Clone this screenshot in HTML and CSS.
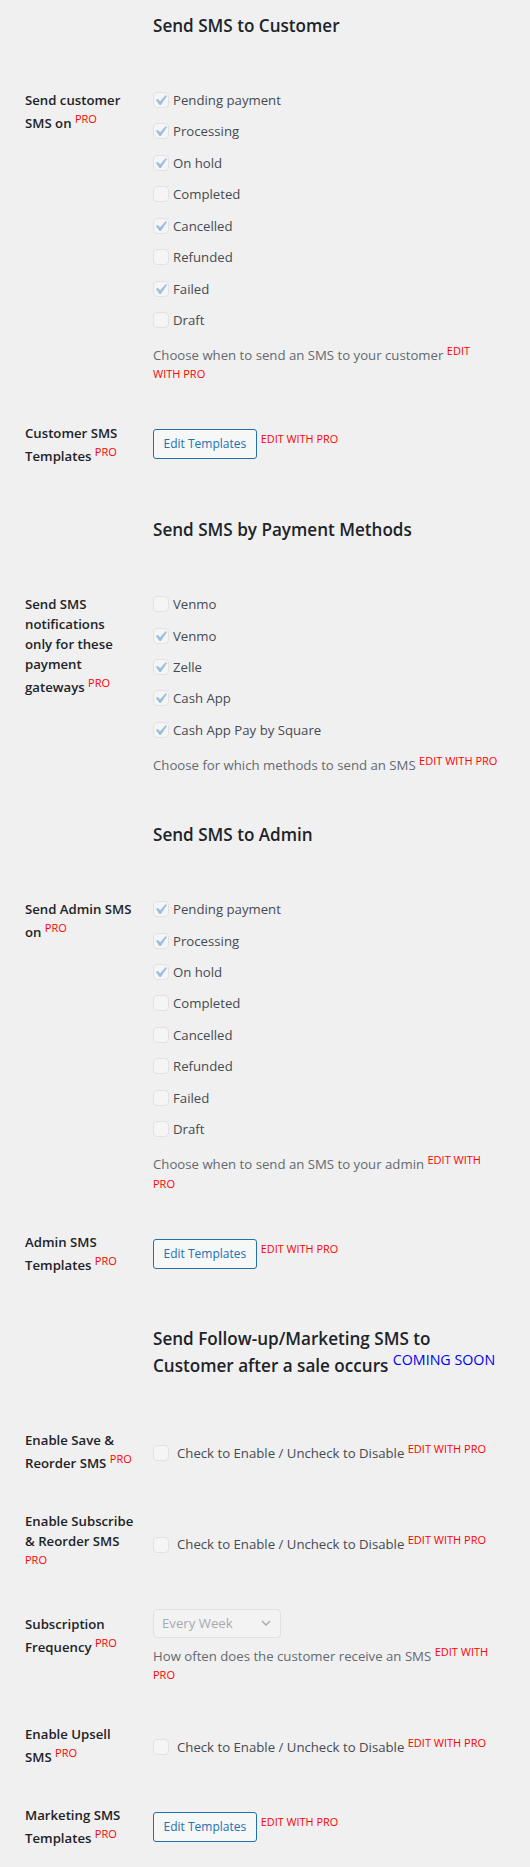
FILE: index.html
```html
<!DOCTYPE html>
<html lang="en">
<head>
<meta charset="utf-8">
<title>SMS Settings</title>
<link rel="stylesheet" href="styles.css">
</head>
<body>
<div class="settings">

  <div class="row row--title">
    <div class="label"></div>
    <h2 class="title">Send SMS to Customer</h2>
  </div>

  <div class="row">
    <div class="label">Send customer SMS on <sup class="pro">PRO</sup></div>
    <div class="field">
      <ul class="checks">
        <li><span class="cb is-checked"><svg viewBox="0 0 20 20"><path d="M14.83 4.89l1.34.94-5.81 8.38H9.02L5.78 9.67l1.34-1.25 2.57 2.4z"/></svg></span>Pending payment</li>
        <li><span class="cb is-checked"><svg viewBox="0 0 20 20"><path d="M14.83 4.89l1.34.94-5.81 8.38H9.02L5.78 9.67l1.34-1.25 2.57 2.4z"/></svg></span>Processing</li>
        <li><span class="cb is-checked"><svg viewBox="0 0 20 20"><path d="M14.83 4.89l1.34.94-5.81 8.38H9.02L5.78 9.67l1.34-1.25 2.57 2.4z"/></svg></span>On hold</li>
        <li><span class="cb"></span>Completed</li>
        <li><span class="cb is-checked"><svg viewBox="0 0 20 20"><path d="M14.83 4.89l1.34.94-5.81 8.38H9.02L5.78 9.67l1.34-1.25 2.57 2.4z"/></svg></span>Cancelled</li>
        <li><span class="cb"></span>Refunded</li>
        <li><span class="cb is-checked"><svg viewBox="0 0 20 20"><path d="M14.83 4.89l1.34.94-5.81 8.38H9.02L5.78 9.67l1.34-1.25 2.57 2.4z"/></svg></span>Failed</li>
        <li><span class="cb"></span>Draft</li>
      </ul>
      <p class="desc">Choose when to send an SMS to your customer <sup class="pro">EDIT WITH PRO</sup></p>
    </div>
  </div>

  <div class="row row--center">
    <div class="label">Customer SMS Templates <sup class="pro">PRO</sup></div>
    <div class="field field--inline">
      <button class="btn" type="button">Edit Templates</button>
      <span class="pro pro--side">EDIT WITH PRO</span>
    </div>
  </div>

  <div class="row row--title">
    <div class="label"></div>
    <h2 class="title">Send SMS by Payment Methods</h2>
  </div>

  <div class="row">
    <div class="label">Send SMS notifications only&nbsp;for&nbsp;these payment gateways <sup class="pro">PRO</sup></div>
    <div class="field">
      <ul class="checks">
        <li><span class="cb"></span>Venmo</li>
        <li><span class="cb is-checked"><svg viewBox="0 0 20 20"><path d="M14.83 4.89l1.34.94-5.81 8.38H9.02L5.78 9.67l1.34-1.25 2.57 2.4z"/></svg></span>Venmo</li>
        <li><span class="cb is-checked"><svg viewBox="0 0 20 20"><path d="M14.83 4.89l1.34.94-5.81 8.38H9.02L5.78 9.67l1.34-1.25 2.57 2.4z"/></svg></span>Zelle</li>
        <li><span class="cb is-checked"><svg viewBox="0 0 20 20"><path d="M14.83 4.89l1.34.94-5.81 8.38H9.02L5.78 9.67l1.34-1.25 2.57 2.4z"/></svg></span>Cash App</li>
        <li><span class="cb is-checked"><svg viewBox="0 0 20 20"><path d="M14.83 4.89l1.34.94-5.81 8.38H9.02L5.78 9.67l1.34-1.25 2.57 2.4z"/></svg></span>Cash App Pay by Square</li>
      </ul>
      <p class="desc">Choose for which methods to send an SMS <sup class="pro">EDIT WITH PRO</sup></p>
    </div>
  </div>

  <div class="row row--title">
    <div class="label"></div>
    <h2 class="title">Send SMS to Admin</h2>
  </div>

  <div class="row">
    <div class="label">Send Admin SMS on <sup class="pro">PRO</sup></div>
    <div class="field">
      <ul class="checks">
        <li><span class="cb is-checked"><svg viewBox="0 0 20 20"><path d="M14.83 4.89l1.34.94-5.81 8.38H9.02L5.78 9.67l1.34-1.25 2.57 2.4z"/></svg></span>Pending payment</li>
        <li><span class="cb is-checked"><svg viewBox="0 0 20 20"><path d="M14.83 4.89l1.34.94-5.81 8.38H9.02L5.78 9.67l1.34-1.25 2.57 2.4z"/></svg></span>Processing</li>
        <li><span class="cb is-checked"><svg viewBox="0 0 20 20"><path d="M14.83 4.89l1.34.94-5.81 8.38H9.02L5.78 9.67l1.34-1.25 2.57 2.4z"/></svg></span>On hold</li>
        <li><span class="cb"></span>Completed</li>
        <li><span class="cb"></span>Cancelled</li>
        <li><span class="cb"></span>Refunded</li>
        <li><span class="cb"></span>Failed</li>
        <li><span class="cb"></span>Draft</li>
      </ul>
      <p class="desc">Choose when to send an SMS to your admin <sup class="pro">EDIT WITH PRO</sup></p>
    </div>
  </div>

  <div class="row row--center">
    <div class="label">Admin SMS Templates <sup class="pro">PRO</sup></div>
    <div class="field field--inline">
      <button class="btn" type="button">Edit Templates</button>
      <span class="pro pro--side">EDIT WITH PRO</span>
    </div>
  </div>

  <div class="row row--title">
    <div class="label"></div>
    <h2 class="title">Send Follow-up/Marketing SMS to Customer after a sale occurs <sup class="soon">COMING SOON</sup></h2>
  </div>

  <div class="row row--center">
    <div class="label">Enable Save &amp; Reorder SMS <sup class="pro">PRO</sup></div>
    <div class="field">
      <label class="toggle"><span class="cb"></span>Check to Enable / Uncheck to Disable <sup class="pro">EDIT WITH PRO</sup></label>
    </div>
  </div>

  <div class="row row--center">
    <div class="label">Enable Subscribe &amp; Reorder SMS <sup class="pro">PRO</sup></div>
    <div class="field">
      <label class="toggle"><span class="cb"></span>Check to Enable / Uncheck to Disable <sup class="pro">EDIT WITH PRO</sup></label>
    </div>
  </div>

  <div class="row row--select">
    <div class="label">Subscription Frequency <sup class="pro">PRO</sup></div>
    <div class="field">
      <div class="select">
        <span>Every Week</span>
        <svg class="chev" viewBox="0 0 10 6"><path d="M1 1l4 4 4-4"/></svg>
      </div>
      <p class="desc desc--tight">How often does the customer receive an SMS <sup class="pro">EDIT WITH PRO</sup></p>
    </div>
  </div>

  <div class="row row--center">
    <div class="label">Enable Upsell SMS <sup class="pro">PRO</sup></div>
    <div class="field">
      <label class="toggle"><span class="cb"></span>Check to Enable / Uncheck to Disable <sup class="pro">EDIT WITH PRO</sup></label>
    </div>
  </div>

  <div class="row row--center">
    <div class="label">Marketing SMS Templates <sup class="pro">PRO</sup></div>
    <div class="field field--inline">
      <button class="btn" type="button">Edit Templates</button>
      <span class="pro pro--side">EDIT WITH PRO</span>
    </div>
  </div>

</div>
</body>
</html>
```

FILE: styles.css
```css
* { box-sizing: border-box; }

html, body {
  margin: 0;
  padding: 0;
  background: #f0f0f1;
}

body {
  font-family: "Open Sans", "Noto Sans", sans-serif;
  font-size: 13.2px;
  line-height: 20px;
  color: #3c434a;
}

.settings {
  width: 530px;
}

.row {
  display: flex;
  align-items: flex-start;
  padding: 19px 32px 19px 25px;
}

.settings > .row:first-child {
  padding-top: 0;
}

.row--center {
  align-items: center;
}

.row--select {
  padding-top: 15px;
}

.label {
  flex: 0 0 113px;
  width: 113px;
  margin-right: 15px;
  font-weight: 600;
  color: #1d2327;
}

.row--select .label {
  padding-top: 5px;
}

.field {
  flex: 1 1 auto;
  min-width: 0;
}

.field--inline {
  display: flex;
  align-items: flex-start;
}

.title {
  flex: 1 1 auto;
  margin: 14px 0;
  font-size: 17.1px;
  line-height: 24px;
  font-weight: 600;
  color: #1d2327;
}

.pro {
  color: #ff0000;
  font-weight: 400;
  font-size: smaller;
  line-height: 17px;
  vertical-align: super;
}

.soon {
  color: #0000f0;
  font-weight: 400;
  font-size: smaller;
  line-height: 18px;
  vertical-align: super;
}

.pro--side {
  vertical-align: baseline;
  font-size: 10.9px;
  line-height: 15px;
  margin: 2px 0 0 4px;
}

.checks {
  list-style: none;
  margin: 0;
  padding: 0;
}

.checks li {
  display: flex;
  align-items: center;
  height: 20px;
  color: #454b51;
}

.checks li + li {
  margin-top: 11.43px;
}

.cb {
  position: relative;
  display: inline-block;
  flex: 0 0 16px;
  width: 16px;
  height: 16px;
  margin-right: 4px;
  border: 1px solid #e2e2e4;
  border-radius: 4px;
  background: #f5f5f6;
}

.cb svg {
  position: absolute;
  left: -4px;
  top: -3px;
  width: 21px;
  height: 21px;
  fill: #9bbfe0;
}

.desc {
  margin: 12px 0 -4px;
  color: #646970;
}

.desc--tight {
  margin-top: 5px;
}

.toggle {
  display: block;
  color: #454b51;
}

.toggle .cb {
  vertical-align: middle;
  margin: -3px 8px 0 0;
}

.btn {
  display: inline-block;
  height: 30px;
  padding: 0 9.5px;
  margin: 0;
  border: 1px solid #2271b1;
  border-radius: 3px;
  background: #f6f7f7;
  color: #2271b1;
  font-family: "Open Sans", "Noto Sans", sans-serif;
  font-size: 12px;
  line-height: 28px;
  cursor: pointer;
}

.select {
  display: flex;
  align-items: center;
  justify-content: space-between;
  width: 128px;
  height: 29px;
  padding: 0 5px 0 8px;
  border: 1px solid #e0e0e2;
  border-radius: 4px;
  background: #f3f3f4;
  color: #a7aaad;
}

.chev {
  width: 10px;
  height: 6px;
  margin-right: 4px;
  fill: none;
  stroke: #a7aaad;
  stroke-width: 1.4;
}
```
